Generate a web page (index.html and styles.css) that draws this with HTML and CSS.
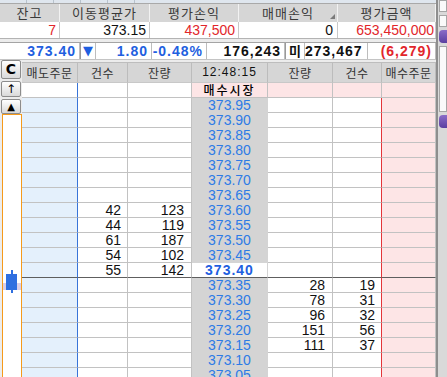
FILE: index.html
```html
<!DOCTYPE html>
<html lang="ko">
<head>
  <meta charset="UTF-8" />
  <title>호가창</title>
  <link rel="stylesheet" href="styles.css">
</head>
<body>

<div class="window">
  <div class="main">
    <div class="topbar">
      <span></span><span></span><span></span><span></span><span></span>
    </div>

    <div class="summary">
      <div class="sum-head">잔고</div>
      <div class="sum-head">이동평균가</div>
      <div class="sum-head">평가손익</div>
      <div class="sum-head sortable">매매손익</div>
      <div class="sum-head">평가금액</div>
      <div class="sum-val red">7</div>
      <div class="sum-val">373.15</div>
      <div class="sum-val red">437,500</div>
      <div class="sum-val pad4">0</div>
      <div class="sum-val red pad1">653,450,000</div>
    </div>

    <div class="quote">
      <div class="q blue">373.40</div>
      <div class="q box blue arrow">▼</div>
      <div class="q blue">1.80</div>
      <div class="q blue">-0.48%</div>
      <div class="q">176,243</div>
      <div class="q box mi">미</div>
      <div class="q wide">273,467</div>
      <div class="q red">(6,279)</div>
    </div>

    <div class="book">
      <div class="side">
        <div class="tool big">C</div>
        <div class="tool">↑</div>
        <div class="tool small">▲</div>
        <div class="chart">
          <span class="band"></span>
          <span class="wick"></span>
          <span class="body"></span>
        </div>
      </div>

      <div class="grid">
        <div class="head">매도주문</div>
        <div class="head">건수</div>
        <div class="head">잔량</div>
        <div class="head time">12:48:15</div>
        <div class="head">잔량</div>
        <div class="head">건수</div>
        <div class="head">매수주문</div>

        <div class="row market">
          <div class="ask"></div><div></div><div></div>
          <div class="px">매수시장</div>
          <div class="pink"></div><div class="pink"></div><div class="bid"></div>
        </div>

        <div class="row"><div class="ask"></div><div></div><div></div><div class="px">373.95</div><div></div><div class="cnt"></div><div class="bid"></div></div>
        <div class="row"><div class="ask"></div><div></div><div></div><div class="px">373.90</div><div></div><div class="cnt"></div><div class="bid"></div></div>
        <div class="row"><div class="ask"></div><div></div><div></div><div class="px">373.85</div><div></div><div class="cnt"></div><div class="bid"></div></div>
        <div class="row"><div class="ask"></div><div></div><div></div><div class="px">373.80</div><div></div><div class="cnt"></div><div class="bid"></div></div>
        <div class="row"><div class="ask"></div><div></div><div></div><div class="px">373.75</div><div></div><div class="cnt"></div><div class="bid"></div></div>
        <div class="row"><div class="ask"></div><div></div><div></div><div class="px">373.70</div><div></div><div class="cnt"></div><div class="bid"></div></div>
        <div class="row"><div class="ask"></div><div></div><div></div><div class="px">373.65</div><div></div><div class="cnt"></div><div class="bid"></div></div>
        <div class="row"><div class="ask"></div><div class="cnt">42</div><div>123</div><div class="px">373.60</div><div></div><div class="cnt"></div><div class="bid"></div></div>
        <div class="row"><div class="ask"></div><div class="cnt">44</div><div>119</div><div class="px">373.55</div><div></div><div class="cnt"></div><div class="bid"></div></div>
        <div class="row"><div class="ask"></div><div class="cnt">61</div><div>187</div><div class="px">373.50</div><div></div><div class="cnt"></div><div class="bid"></div></div>
        <div class="row"><div class="ask"></div><div class="cnt">54</div><div>102</div><div class="px">373.45</div><div></div><div class="cnt"></div><div class="bid"></div></div>
        <div class="row current"><div class="ask"></div><div class="cnt">55</div><div>142</div><div class="px">373.40</div><div></div><div class="cnt"></div><div class="bid"></div></div>
        <div class="row"><div class="ask"></div><div></div><div></div><div class="px">373.35</div><div>28</div><div class="cnt">19</div><div class="bid"></div></div>
        <div class="row"><div class="ask"></div><div></div><div></div><div class="px">373.30</div><div>78</div><div class="cnt">31</div><div class="bid"></div></div>
        <div class="row"><div class="ask"></div><div></div><div></div><div class="px">373.25</div><div>96</div><div class="cnt">32</div><div class="bid"></div></div>
        <div class="row"><div class="ask"></div><div></div><div></div><div class="px">373.20</div><div>151</div><div class="cnt">56</div><div class="bid"></div></div>
        <div class="row"><div class="ask"></div><div></div><div></div><div class="px">373.15</div><div>111</div><div class="cnt">37</div><div class="bid"></div></div>
        <div class="row"><div class="ask"></div><div></div><div></div><div class="px">373.10</div><div></div><div class="cnt"></div><div class="bid"></div></div>
        <div class="row"><div class="ask"></div><div></div><div></div><div class="px">373.05</div><div></div><div class="cnt"></div><div class="bid"></div></div>
      </div>
    </div>
  </div>

  <div class="rail">
    <span class="rail-box"></span>
    <span class="rail-box"></span>
    <span class="rail-knob"></span>
    <span class="rail-box tall"></span>
    <span class="rail-knob"></span>
  </div>
</div>

</body>
</html>
```

FILE: styles.css
```css
body {
  margin: 0;
  width: 447px;
  height: 377px;
  overflow: hidden;
  background-color: #ececec;
  font-family: "Noto Sans CJK KR", "Liberation Sans", sans-serif;
  color: #111;
}

.window {
  display: flex;
  height: 377px;
}

.main {
  width: 436px;
  display: flex;
  flex-direction: column;
}

/* digits use a narrow face, close to the bitmap font of the original */
.sum-val,
.q,
.grid .row > div,
.time {
  font-family: "Liberation Sans Narrow", "Liberation Sans", sans-serif;
  font-size: 14px;
}

.red { color: #e2262b; }
.blue { color: #1f5fe0; }

/* strip of buttons belonging to the panel above */
.topbar {
  height: 3px;
  display: flex;
  background-color: #dfe6ee;
}

.topbar span {
  width: 26px;
  border-right: 1px solid #b8c2cc;
}

/* balance summary */
.summary {
  display: grid;
  grid-template-columns: 60px 90px 89px 99px 98px;
  border-top: 1px solid #a9a9a9;
  border-bottom: 1px solid #b3b3b3;
}

.sum-head {
  position: relative;
  height: 18px;
  line-height: 18px;
  text-align: center;
  font-size: 13px;
  letter-spacing: 1px;
  color: #3a3a3a;
  background-color: #d6d6d6;
  border-right: 1px solid #f2f2f2;
}

.sortable::after {
  content: "";
  position: absolute;
  right: 2px;
  bottom: 3px;
  border-style: solid;
  border-width: 0 0 5px 5px;
  border-color: transparent transparent #7a7a7a transparent;
}

.sum-val {
  height: 16px;
  line-height: 16px;
  text-align: right;
  padding-right: 3px;
  background-color: #fff;
  border-right: 1px solid #c9c9c9;
}

.sum-val.pad4 { padding-right: 4px; }
.sum-val.pad1 { padding-right: 1px; }

/* current quote line */
.quote {
  margin-top: 3px;
  display: grid;
  grid-template-columns: 80px 16px 56px 55px 78px 20px 63px 68px;
  background-color: #fff;
  border-top: 1px solid #a4a4a4;
  border-bottom: 1px solid #c4c4c4;
}

.q {
  height: 16px;
  line-height: 16px;
  text-align: right;
  padding-right: 3px;
  font-weight: bold;
  letter-spacing: 1px;
  border-right: 1px solid #bdbdbd;
}

.q.box {
  padding: 0;
  text-align: center;
  letter-spacing: 0;
  border-left: 1px solid #9a9a9a;
}

.q.arrow {
  font-family: "DejaVu Sans", sans-serif;
  font-size: 13px;
}

.q.mi {
  font-family: "Noto Sans CJK KR", sans-serif;
  font-size: 13px;
}

.q.wide { padding-right: 9px; }

/* order book */
.book {
  display: flex;
  margin-top: 2px;
  flex: 1;
  min-height: 0;
}

.side {
  width: 22px;
  margin-top: -2px;
  display: flex;
  flex-direction: column;
  align-items: center;
}

.tool {
  width: 18px;
  height: 14px;
  line-height: 14px;
  margin-bottom: 2px;
  text-align: center;
  font-size: 12px;
  color: #000;
  background: linear-gradient(#ffffff, #d9d9d9);
  border: 1px solid #8c8c8c;
  border-radius: 2px;
  font-family: "DejaVu Sans", sans-serif;
}

.tool.big {
  height: 17px;
  line-height: 17px;
  font-weight: bold;
  font-size: 14px;
}

.tool.small {
  height: 13px;
  line-height: 13px;
  margin-bottom: 0;
  font-size: 10px;
}

.chart {
  position: relative;
  align-self: stretch;
  margin-left: 2px;
  flex: 1;
  background-color: #fff;
  border: 1px solid #f59a1b;
  border-bottom: none;
}

.chart .band {
  position: absolute;
  left: 0;
  right: 0;
  top: 168px;
  height: 7px;
  background-color: #dccfe6;
}

.chart .wick {
  position: absolute;
  left: 8px;
  top: 155px;
  width: 2px;
  height: 23px;
  background-color: #2f6fe0;
}

.chart .body {
  position: absolute;
  left: 3px;
  top: 159px;
  width: 11px;
  height: 16px;
  background-color: #2f6fe0;
}

.grid {
  display: grid;
  grid-template-columns: 56px 50px 64px 76px 65px 49px 54px;
  grid-auto-rows: 15px;
  grid-template-rows: 20px;
  align-content: start;
  border-top: 1px solid #bdbdbd;
}

.head {
  text-align: center;
  font-size: 12px;
  line-height: 19px;
  letter-spacing: 0.5px;
  color: #333;
  background-color: #d6d6d6;
  border-right: 1px solid #bcbcbc;
  border-bottom: 1px solid #c8c8c8;
}

.head.time {
  color: #111;
  letter-spacing: 1px;
}

.row {
  display: contents;
}

.row > div {
  box-sizing: border-box;
  height: 15px;
  line-height: 15px;
  padding-right: 7px;
  text-align: right;
  background-color: #fff;
  border-right: 1px solid #c2c2c2;
  border-bottom: 1px solid #c2c2c2;
}

.row > .cnt { padding-right: 6px; }

.row > .ask {
  background-color: #e4f0fc;
  border-right-color: #3874d8;
}

.row > .px {
  padding: 0;
  text-align: center;
  color: #2d7be6;
  background-color: #d4d4d4;
  border-right-color: #d4d4d4;
  border-bottom-color: #d4d4d4;
}

.row > .bid {
  background-color: #fde5e6;
}

.row > .cnt:nth-child(6) {
  border-right-color: #e3353a;
}

.row.market > .ask { background-color: #fff; }

.row.market > .pink,
.row.market > .px {
  background-color: #fde5e6;
}

.row.market > .px {
  color: #000;
  font-family: "Noto Sans CJK KR", sans-serif;
  font-size: 12px;
  font-weight: 500;
  line-height: 14px;
  letter-spacing: 2px;
  border-right-color: #c2c2c2;
  border-bottom-color: #c2c2c2;
}

.row.current > div {
  border-bottom-color: #5e5e5e;
}

.row.current > .px {
  color: #1f5fe0;
  font-weight: bold;
  letter-spacing: 1px;
  background-color: #fff;
  border-bottom-color: #5e5e5e;
}

/* edge of the neighbouring panel */
.rail {
  width: 8px;
  display: flex;
  flex-direction: column;
  gap: 3px;
  padding-left: 1px;
  background-color: #d9d9d9;
  border-left: 2px solid #8e8e8e;
}

.rail-box {
  height: 10px;
  background-color: #fafafa;
  border: 1px solid #a6a6a6;
}

.rail-box.tall { height: 64px; }

.rail-knob {
  height: 13px;
  border-radius: 4px 0 0 4px;
  background: linear-gradient(#8b6cc8, #5b3fa0);
}
```
